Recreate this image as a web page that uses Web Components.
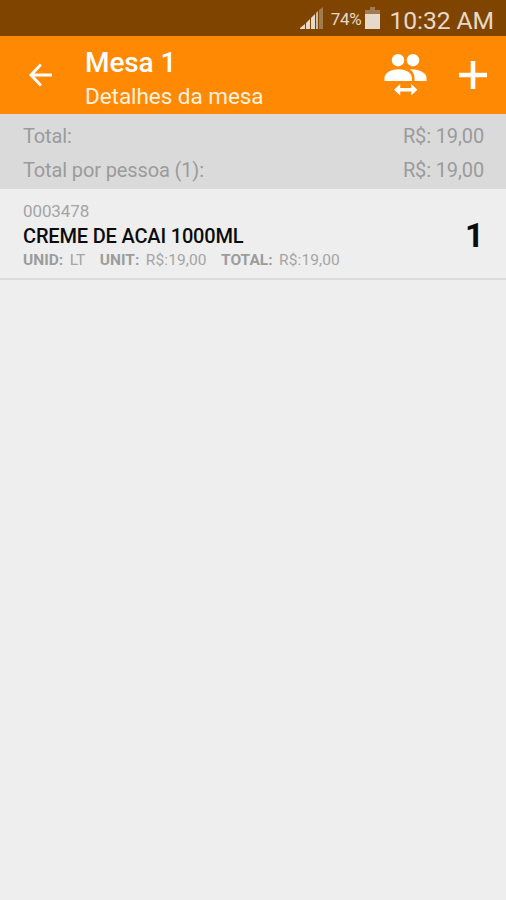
<!DOCTYPE html>
<html lang="pt-BR">
<head>
<meta charset="utf-8">
<title>Mesa 1</title>
<style>
  body {
    margin: 0;
    background: #eee;
    font-family: Roboto, 'Liberation Sans', sans-serif;
  }
</style>
</head>
<body>
<mesa-app>
  <status-bar battery="74%" time="10:32 AM"></status-bar>
  <app-bar>
    <span slot="title">Mesa 1</span>
    <span slot="subtitle">Detalhes da mesa</span>
  </app-bar>
  <total-panel>
    <total-row label="Total:">R$: 19,00</total-row>
    <total-row label="Total por pessoa (1):">R$: 19,00</total-row>
  </total-panel>
  <order-item code="0003478" name="CREME DE ACAI 1000ML" quantity="1">
    <item-detail label="UNID:">LT</item-detail>
    <item-detail label="UNIT:">R$:19,00</item-detail>
    <item-detail label="TOTAL:">R$:19,00</item-detail>
  </order-item>
</mesa-app>

<script>
// clones the markup into an open shadow root and fills [data-attr] nodes
class BaseElement extends HTMLElement {
  constructor() {
    super();
    this._shadowRoot = this.attachShadow({ mode: 'open' });
  }

  connectedCallback() {
    const template = document.createElement('template');
    template.innerHTML = this.constructor.markup;
    this._shadowRoot.replaceChildren(template.content.cloneNode(true));
    this._shadowRoot.querySelectorAll('[data-attr]').forEach(el => {
      el.textContent = this.getAttribute(el.dataset.attr) || '';
    });
  }
}

class MesaApp extends BaseElement {
  static markup = `
<style>
  :host {
    display: flex;
    flex-direction: column;
    min-height: 100vh;
    background: #eee;
  }
</style>
<slot></slot>
`;
}

class StatusBar extends BaseElement {
  static markup = `
<style>
  :host {
    display: flex;
    align-items: center;
    justify-content: flex-end;
    box-sizing: border-box;
    height: 36px;
    padding: 3px 12px 0 0;
    background: #7f4500;
    color: #e6d8ca;
    white-space: nowrap;
  }
  svg {
    display: block;
    margin-top: -3px;
  }
  .battery-level {
    font-size: 17px;
    margin: -1px 3px 0 7px;
    letter-spacing: -0.3px;
  }
  .time {
    font-size: 24.7px;
    margin-left: 10px;
    padding-top: 1px;
    letter-spacing: -0.1px;
  }
</style>
<svg width="24" height="22" viewBox="0 0 24 22">
  <path fill="#e6d8ca" d="M0 22v-1l5-4v5zM6 22v-6l4-4v10zM11 22V11l4-4v15z"/>
  <path fill="#d0bba5" d="M16 22V6l2-2v18z"/>
  <path fill="#a37b50" d="M19 22V3l4-3v22z"/>
</svg>
<span class="battery-level" data-attr="battery"></span>
<svg width="15" height="22" viewBox="0 0 15 22">
  <path fill="#a37b50" d="M5 0h5v3h5v4H0V3h5z"/>
  <path fill="#e6d8ca" d="M0 7h15v15H0z"/>
</svg>
<span class="time" data-attr="time"></span>
`;
}

class AppBar extends BaseElement {
  static markup = `
<style>
  :host {
    display: flex;
    align-items: center;
    box-sizing: border-box;
    height: 78px;
    padding: 0 19px 0 28px;
    background: #ff8903;
    color: #fff;
  }
  svg {
    display: block;
    fill: currentColor;
  }
  .titles {
    flex: 1;
    margin-left: 33px;
    padding-top: 8px;
    white-space: nowrap;
  }
  .title {
    font-size: 28px;
    font-weight: 500;
    line-height: 34px;
    letter-spacing: -0.1px;
  }
  .subtitle {
    font-size: 22.5px;
    line-height: 33px;
    letter-spacing: -0.05px;
    color: #fff1df;
  }
  .people {
    margin-right: 31px;
  }
</style>
<svg width="24" height="24" viewBox="0 0 24 24">
  <path d="M24 10.6v2.9H6.500l7.400 7.900-2 2.100L1 12 11.900.5l2 2.100-7.400 8z"/>
</svg>
<div class="titles">
  <div class="title"><slot name="title"></slot></div>
  <div class="subtitle"><slot name="subtitle"></slot></div>
</div>
<svg class="people" width="44" height="44" viewBox="0 0 44 44">
  <circle cx="14" cy="7.2" r="6.2"/>
  <circle cx="29" cy="7.2" r="6.2"/>
  <path d="M.5 28v-3.2c0-5.2 7.6-8.6 14-8.6s13.400 3.400 13.400 8.600V28z"/>
  <path d="M30.500 28v-3.600c0-3.400-1.800-6-4.600-8 7-.4 16.600 2.700 16.600 8.400V28z"/>
  <path d="M10 36.800l6.200-5.700v4h11v-4l6.200 5.700-6.200 5.700v-4h-11v4z"/>
</svg>
<svg width="28" height="28" viewBox="0 0 28 28">
  <path d="M11.700 0h4.600v11.700H28v4.600H16.300V28h-4.600V16.300H0v-4.600h11.700z"/>
</svg>
`;
}

class TotalPanel extends BaseElement {
  static markup = `
<style>
  :host {
    display: block;
    box-sizing: border-box;
    height: 75px;
    padding: 5px 22px 0 23px;
    background: #dadada;
    color: #9b9b9b;
  }
</style>
<slot></slot>
`;
}

class TotalRow extends BaseElement {
  static markup = `
<style>
  :host {
    display: flex;
    justify-content: space-between;
    font-size: 20px;
    line-height: 34px;
    letter-spacing: -0.13px;
  }
</style>
<span data-attr="label"></span>
<span><slot></slot></span>
`;
}

class OrderItem extends BaseElement {
  static markup = `
<style>
  :host {
    display: flex;
    align-items: center;
    justify-content: space-between;
    box-sizing: border-box;
    height: 91px;
    padding: 2px 22px 0 23px;
    border-bottom: 2px solid #dcdcdc;
    white-space: nowrap;
  }
  .code {
    font-size: 17px;
    line-height: 22px;
    letter-spacing: -0.1px;
    color: #a4a4a4;
  }
  .name {
    font-size: 20px;
    font-weight: 500;
    line-height: 28px;
    letter-spacing: -0.17px;
    color: #0c0c0c;
  }
  .details {
    display: flex;
    gap: 14.5px;
    line-height: 20px;
  }
  .quantity {
    font-size: 33px;
    font-weight: 700;
    color: #0c0c0c;
    padding-top: 1px;
  }
</style>
<div>
  <div class="code" data-attr="code"></div>
  <div class="name" data-attr="name"></div>
  <div class="details"><slot></slot></div>
</div>
<div class="quantity" data-attr="quantity"></div>
`;
}

class ItemDetail extends BaseElement {
  static markup = `
<style>
  :host {
    display: flex;
    gap: 6.5px;
    font-size: 15.5px;
    color: #a4a4a4;
  }
  b {
    font-weight: 700;
    color: #9c9c9c;
  }
  span {
    letter-spacing: 0.1px;
  }
</style>
<b data-attr="label"></b>
<span><slot></slot></span>
`;
}

customElements.define('mesa-app', MesaApp);
customElements.define('status-bar', StatusBar);
customElements.define('app-bar', AppBar);
customElements.define('total-panel', TotalPanel);
customElements.define('total-row', TotalRow);
customElements.define('order-item', OrderItem);
customElements.define('item-detail', ItemDetail);
</script>
</body>
</html>
